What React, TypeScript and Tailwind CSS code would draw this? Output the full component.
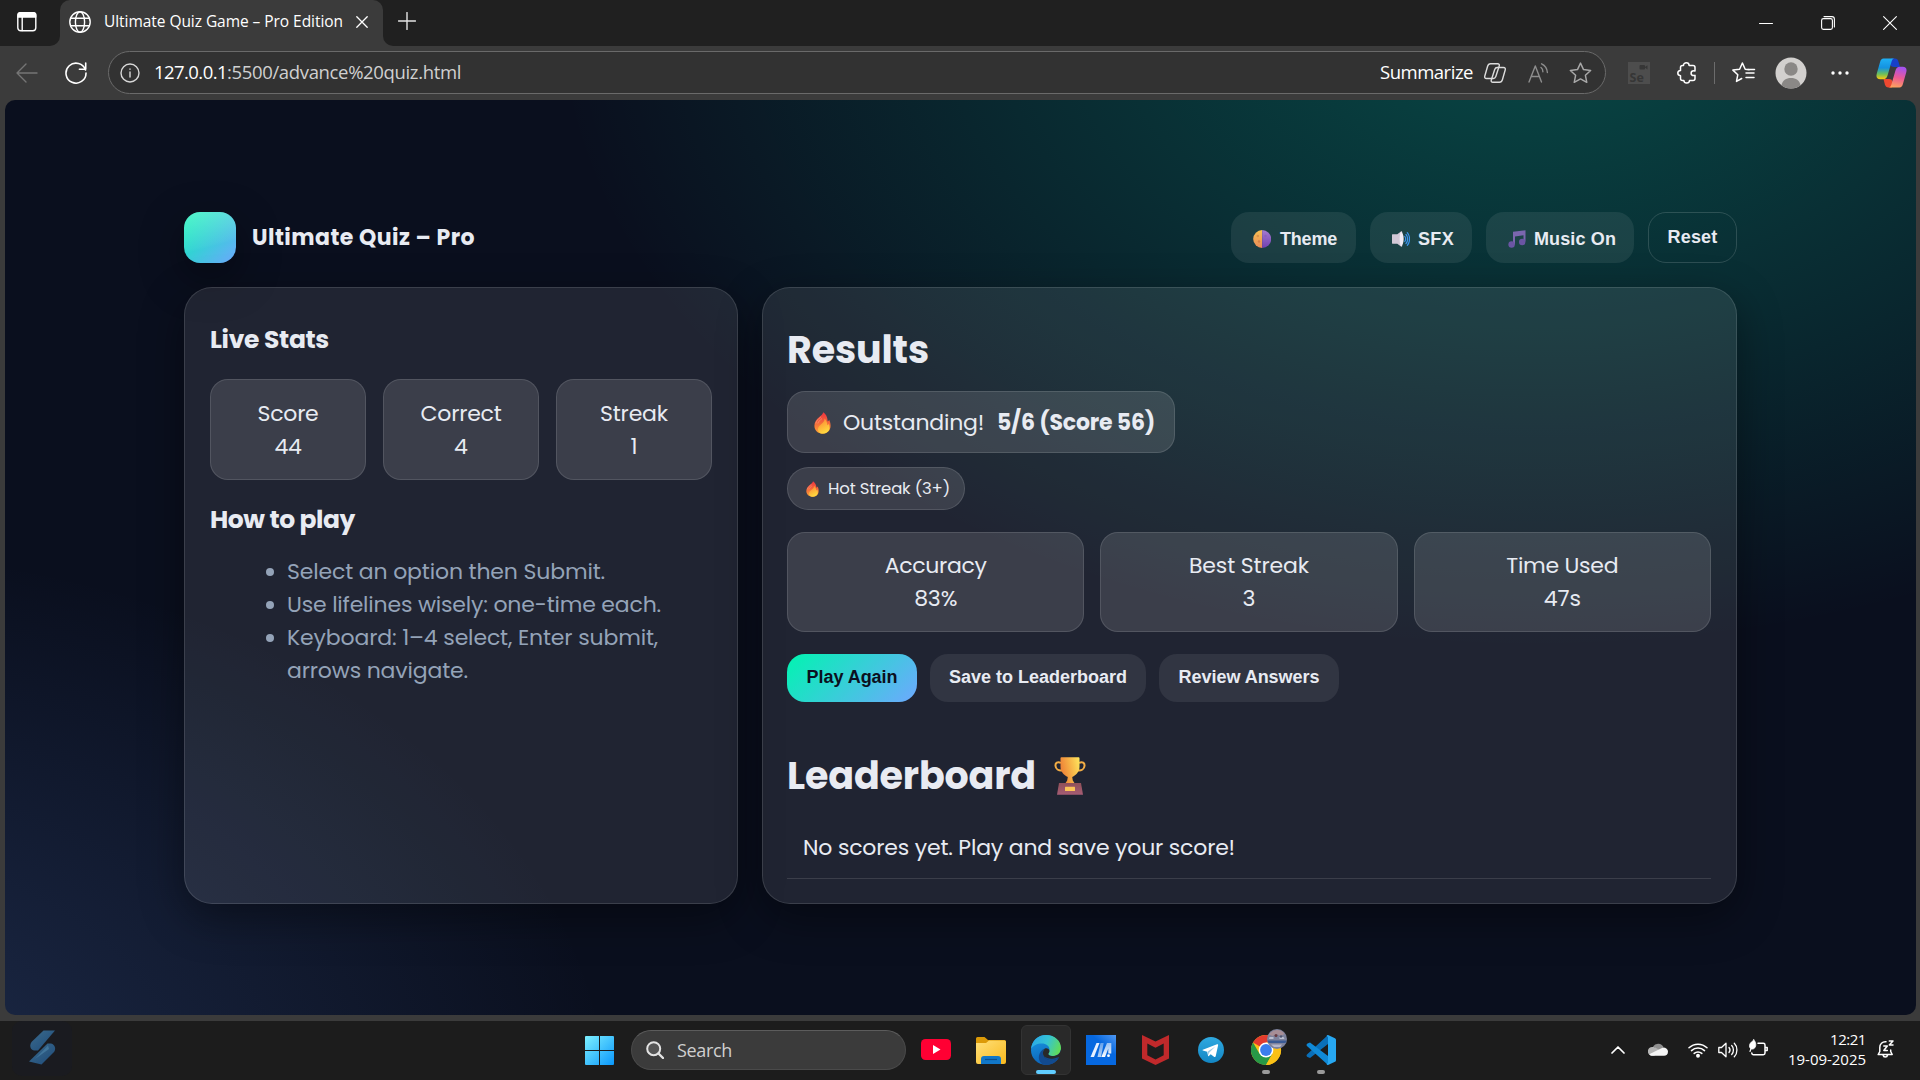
import { useLayoutEffect, useRef, type ReactNode } from 'react';

/** A single line of text whose tracking is adjusted so that it spans `w` pixels. */
function Fit({ w, className = '', children }: { w: number; className?: string; children: string }) {
  const ref = useRef<HTMLSpanElement>(null);
  useLayoutEffect(() => {
    const el = ref.current;
    if (!el) return;
    el.style.letterSpacing = '0px';
    const natural = el.getBoundingClientRect().width;
    el.style.letterSpacing = `${(w - natural) / children.length}px`;
  }, [w, children]);
  return (
    <span ref={ref} className={`inline-block shrink-0 whitespace-pre ${className}`}>
      {children}
    </span>
  );
}

/* ---------- emoji drawings ---------- */

function Fire({ className }: { className: string }) {
  return (
    <svg viewBox="0 0 17 22" className={className} preserveAspectRatio="none">
      <defs>
        <linearGradient id="fireOuter" x1="0" y1="0" x2="0" y2="1">
          <stop offset="0" stopColor="#ef3340" />
          <stop offset=".5" stopColor="#f46a3a" />
          <stop offset="1" stopColor="#fca436" />
        </linearGradient>
        <linearGradient id="fireInner" x1="0" y1="0" x2=".4" y2="1">
          <stop offset="0" stopColor="#fb7a36" />
          <stop offset=".45" stopColor="#fda638" />
          <stop offset="1" stopColor="#ffd83f" />
        </linearGradient>
      </defs>
      <path d="M9.200.3c-.4 2.300-2.400 3.400-3.900 4.700C2.600 7.200.4 9.800.4 13.800.4 18.600 4 21.700 8.500 21.700s8.100-3.100 8.100-8c0-2.800-.8-4.500-1.400-6-.5.9-.9 1.300-1.500 1.700C13.600 5.200 11.800 2 9.200.3Z" fill="url(#fireOuter)" />
      <path d="M1.800 11.500C2.500 8.500 4.500 6.800 7 4.800M3.800 11.500C4.500 9.500 6 8 8 6.500" fill="none" stroke="#f9a08a" strokeWidth=".6" />
      <path d="M10.500 6.500c.2 2.800-1.900 4.500-3.600 6-1.500 1.300-3 2.700-3 4.900 0 2.700 2.200 4.200 5 4.200 3.900 0 6.600-2.500 6.600-6 0-1.500-.3-2.800-.9-3.900-.3.8-.7 1.200-1.300 1.500-.1-2.700-1-5.200-2.800-6.700Z" fill="url(#fireInner)" />
    </svg>
  );
}

function HalfMoon() {
  return (
    <svg viewBox="0 0 18 18" className="size-[18px]">
      <defs>
        <linearGradient id="moonL" x1="0" y1="0" x2="0" y2="1">
          <stop offset="0" stopColor="#f8c152" />
          <stop offset="1" stopColor="#e98a58" />
        </linearGradient>
        <linearGradient id="moonR" x1="0" y1="0" x2="0" y2="1">
          <stop offset="0" stopColor="#a57bd0" />
          <stop offset="1" stopColor="#7140b0" />
        </linearGradient>
      </defs>
      <path d="M9.200 0v18A9 9 0 0 1 9.200 0Z" fill="url(#moonL)" />
      <path d="M9.200 0v18A9 9 0 0 0 9.200 0Z" fill="url(#moonR)" />
      <circle cx="4.800" cy="6" r="1.300" fill="#d9934a" />
      <circle cx="6" cy="11.500" r="1.200" fill="#d98048" />
      <circle cx="12.500" cy="6" r="1.200" fill="#8a5fc0" />
      <circle cx="13.500" cy="11" r="1" fill="#8658bb" />
    </svg>
  );
}

function Speaker() {
  return (
    <svg viewBox="0 0 18 16" className="h-4 w-[18px]">
      <path d="M.5 3.300h4.800L9 .4c.6-.3 1.200 0 1.200.5v14.200c0 .5-.6.8-1.200.5l-3.700-2.900H.5c-.3 0-.5-.2-.5-.5V3.800c0-.3.2-.5.5-.5Z" fill="#d2c8d6" />
      <path d="M9 .6c-1.800 3.500-1.800 11.300 0 14.800 3.600-2 3.600-12.800 0-14.800Z" fill="#f0ebf4" />
      <path d="M12.800 5.500c1 1.400 1 3.600 0 5M14 3.500c2.200 2.300 2.200 6.700 0 9M15.300 1.700c3 3.400 3 9.200 0 12.600" fill="none" stroke="#3b94ea" strokeWidth="1.200" strokeLinecap="round" />
    </svg>
  );
}

function Notes() {
  return (
    <svg viewBox="0 0 18 18" className="size-[18px]">
      <path d="M5 1.800 17.500.2v11.300h-2V5.200L7 6.400v8.100H5Z" fill="#7a66ae" />
      <circle cx="3.600" cy="14.500" r="3.200" fill="#6a55a3" />
      <circle cx="14.200" cy="12" r="3.200" fill="#6a55a3" />
    </svg>
  );
}

function Trophy() {
  return (
    <svg viewBox="0 0 32 38" className="h-[38px] w-8">
      <defs>
        <linearGradient id="cup" x1="0" x2="1" y1=".3" y2="0">
          <stop offset="0" stopColor="#ee8438" />
          <stop offset=".5" stopColor="#f7b548" />
          <stop offset="1" stopColor="#ffe75e" />
        </linearGradient>
        <linearGradient id="base" x1="0" x2="0" y1="0" y2="1">
          <stop offset="0" stopColor="#8f5058" />
          <stop offset="1" stopColor="#a55c74" />
        </linearGradient>
      </defs>
      <path d="M7 6C3.500 4 1.200 6 1.500 8.800c.3 3 3 5 6.500 4.700M25 6c3.500-2 5.800 0 5.500 2.800-.3 3-3 5-6.500 4.700" fill="none" stroke="#f3ad45" strokeWidth="2" />
      <path d="M6.500 1.200c0-.6.300-.9.900-.9h17.200c.6 0 .9.300.9.900v8.600c0 4.700-3.300 8.600-7.300 10.200l.6 3.500 2 3H11.200l2-3 .6-3.500c-4-1.600-7.300-5.500-7.300-10.200Z" fill="url(#cup)" />
      <path d="M5 26h22l2 11.700H3Z" fill="url(#base)" />
      <rect x="11" y="29.800" width="10" height="4.200" rx=".5" fill="#fbc458" />
    </svg>
  );
}

/* ---------- browser chrome ---------- */

function Stroke({ box, className, children, color = '#fff', w = 1.5 }: { box: string; className: string; children: ReactNode; color?: string; w?: number }) {
  return (
    <svg viewBox={box} className={`shrink-0 ${className}`} fill="none" stroke={color} strokeWidth={w} strokeLinecap="round" strokeLinejoin="round">
      {children}
    </svg>
  );
}

function TitleBar() {
  return (
    <div className="flex h-[46px] items-start bg-[#202020]">
      <div className="flex h-[46px] w-[60px] bg-[#3b3b3b]">
        <div className="flex h-full w-full rounded-br-[10px] bg-[#202020] pt-3 pl-[17px]">
          <Stroke box="0 0 20 20" className="size-5" w={1.4}>
            <rect x=".8" y=".8" width="18" height="18" rx="3" />
            <path d="M1 2.600C1 1.500 2 .8 3 .8h13.500c1.300 0 2.200.8 2.200 2V5H1Z" fill="#fff" />
            <path d="M5.200 5v13.500" />
          </Stroke>
        </div>
      </div>
      <div className="flex h-[46px] w-[323px] items-center rounded-t-[10px] bg-[#3b3b3b] pb-[2px] pl-[9px]">
        <Stroke box="0 0 22 22" className="size-[22px]" w={1.4}>
          <circle cx="11" cy="11" r="10.200" />
          <ellipse cx="11" cy="11" rx="4.600" ry="10.200" />
          <path d="M1.700 7.300h18.600M1.700 14.700h18.600" />
        </Stroke>
        <Fit w={239} className="mb-[2px] ml-[13px] text-[15.500px] leading-5 text-white">Ultimate Quiz Game – Pro Edition</Fit>
        <Stroke box="0 0 12 12" className="ml-[13px] size-3" w={1.300}>
          <path d="m.8.8 10.400 10.400M11.200.8.8 11.200" />
        </Stroke>
      </div>
      <div className="flex h-[46px] flex-1 bg-[#3b3b3b]">
        <div className="flex flex-1 rounded-bl-[10px] bg-[#202020] pl-[15px]">
          <Stroke box="0 0 18 18" className="mt-3 size-[18px]" color="#e4e4e4" w={1.400}>
            <path d="M9 .5v17M.5 9h17" />
          </Stroke>
          <div className="flex flex-1 justify-end gap-12 pt-4 pr-[23px]">
            <Stroke box="0 0 14 14" className="size-[14px]" w={1}>
              <path d="M.5 7.500h13" />
            </Stroke>
            <Stroke box="0 0 14 14" className="size-[14px]" w={1.100}>
              <rect x=".6" y="2.600" width="10.800" height="10.800" rx="1.800" />
              <path d="M3 .6h8c1.500 0 2.400 1 2.400 2.400v8" />
            </Stroke>
            <Stroke box="0 0 14 14" className="size-[14px]" w={1.100}>
              <path d="m.6.6 12.800 12.800M13.400.6.6 13.400" />
            </Stroke>
          </div>
        </div>
      </div>
    </div>
  );
}

const STAR = 'M11 1l2.900 6.200 6.800.8-5 4.700 1.300 6.700-6-3.300-6 3.300 1.300-6.700-5-4.700 6.800-.8Z';

function Toolbar() {
  return (
    <div className="flex h-[54px] items-center bg-[#3b3b3b] pr-[13px] pb-px pl-4">
      <Stroke box="0 0 22 20" className="h-5 w-[22px]" color="#757575" w={1.400}>
        <path d="M10 1 1 10l9 9M1 10h20" />
      </Stroke>
      <Stroke box="0 0 22 22" className="ml-[27px] size-[22px]" w={1.600}>
        <path d="M20.500 8A10 10 0 1 0 21 11M20.700 1v6.300h-6.300" />
      </Stroke>
      <div className="ml-[21px] flex h-[43px] w-[1498px] items-center rounded-full border border-[#6a6a6a] bg-[#323232] pl-[11px]">
        <Stroke box="0 0 20 20" className="size-5" color="#d8d8d8" w={1.400}>
          <circle cx="10" cy="10" r="9" />
          <path d="M10 9v5M10 6v.2" />
        </Stroke>
        <Fit w={73} className="mb-px ml-[14px] text-[18.500px] leading-6 text-white">127.0.0.1</Fit>
        <Fit w={234} className="mb-px text-[18.500px] leading-6 text-[#d0d0d0]">:5500/advance%20quiz.html</Fit>
        <div className="mr-[13px] ml-auto flex items-center">
          <Fit w={93} className="mb-px text-[18.500px] leading-6 text-white">Summarize</Fit>
          <Stroke box="0 0 22 20" className="ml-[11px] h-5 w-[22px]" color="#dcdcdc" w={1.400}>
            <path d="M6.500.8h7.200c1.300 0 1.900 1 1.500 2.200l-3.400 10.500c-.5 1.500-1.200 2-2.500 2H2.500C1 15.500.4 14.500.8 13L3.600 3.300C4.100 1.600 5 .8 6.500.8Z" />
            <path d="M15.500 19.200H8.800c-1.300 0-1.900-1-1.500-2.200l3.400-10.500c.5-1.500 1.200-2 2.500-2h6.300c1.500 0 2.100 1 1.700 2.500l-2.800 9.700c-.5 1.700-1.400 2.500-2.900 2.500Z" />
          </Stroke>
          <Stroke box="0 0 22 20" className="ml-[22px] h-5 w-[22px]" color="#8d8d8d" w={1.400}>
            <path d="M1 19 7.300 3 13.500 19M3.300 13.500h8M13 4.500c1.300 1 1.900 2.500 1.900 4.200M13.600.8c3.200 1.500 5.500 4.300 5.800 8.700" />
          </Stroke>
          <Stroke box="0 0 22 20" className="ml-[19px] h-[21px] w-[23px]" color="#a8a8a8" w={1.400}>
            <path d={STAR} />
          </Stroke>
        </div>
      </div>
      <svg viewBox="0 0 22 22" className="ml-[22px] size-[22px] shrink-0">
        <rect width="22" height="22" fill="#4d4d4d" />
        <rect x="11.500" y="3" width="5.500" height="4.500" rx="1" fill="#363636" />
        <path d="m16.500 5.200 3-2v4.200Z" fill="#363636" />
        <text x="1.500" y="19.500" fontSize="12.500" fontWeight="700" fill="#363636" fontFamily="Open Sans, sans-serif">Se</text>
      </svg>
      <Stroke box="0 0 20 22" className="ml-[27px] h-[22px] w-5" w={1.500}>
        <path d="M6.500 3.500c0-1.600 1.200-2.700 2.800-2.700s2.800 1.100 2.800 2.700H16c1.200 0 2 .8 2 2v3.600c-.4-.2-.8-.3-1.200-.3-1.600 0-2.700 1-2.700 2.400s1.100 2.400 2.700 2.400c.4 0 .8-.1 1.200-.3v3.200c0 1.200-.8 2-2 2h-3.500c-.1 1.600-1.300 2.600-2.800 2.600s-2.700-1-2.800-2.600H5.500c-1.200 0-2-.8-2-2v-2.800C1.900 13.600.8 12.600.8 11.100S1.900 8.500 3.500 8.400V5.500c0-1.200.8-2 2-2Z" />
      </Stroke>
      <div className="ml-[17px] h-[22px] w-px shrink-0 bg-[#6c6c6c]" />
      <Stroke box="0 0 24 22" className="ml-[17px] h-[22px] w-6" w={1.500}>
        <path d="M17 7.800l-3.800-.5L10.400 1 7.600 7.300l-6.700.8 4.900 4.600-1.300 6.700 5.200-2.900M14 11h8M14 15.500h8M16 7.500h6.500" />
      </Stroke>
      <svg viewBox="0 0 32 32" className="ml-[19px] size-8 shrink-0">
        <circle cx="16" cy="16" r="15.500" fill="#d2d0ce" />
        <circle cx="16" cy="12" r="6.700" fill="#8a8886" />
        <path d="M6.500 28.200C7.500 23.500 11 21 16 21s8.500 2.500 9.500 7.200a15.400 15.400 0 0 1-19 0Z" fill="#8a8886" />
      </svg>
      <svg viewBox="0 0 18 4" className="ml-[24px] h-1 w-[18px] shrink-0" fill="#fff">
        <circle cx="2" cy="2" r="1.700" />
        <circle cx="9" cy="2" r="1.700" />
        <circle cx="16" cy="2" r="1.700" />
      </svg>
      <svg viewBox="0 0 31 30" className="mt-px ml-auto h-[30px] w-[31px] shrink-0">
        <defs>
          <linearGradient id="cpA" x1="0" y1="0" x2="0" y2="1">
            <stop offset="0" stopColor="#1fb0f5" />
            <stop offset=".45" stopColor="#1492e0" />
            <stop offset=".75" stopColor="#6cc05a" />
            <stop offset="1" stopColor="#fcc80e" />
          </linearGradient>
          <linearGradient id="cpB" x1=".5" y1="0" x2=".3" y2="1">
            <stop offset="0" stopColor="#a552ee" />
            <stop offset=".5" stopColor="#ec5a94" />
            <stop offset="1" stopColor="#ffa45c" />
          </linearGradient>
        </defs>
        <path d="M15 .5h4c2 0 2.800 1 3.500 3.300L24 9h-6c-2 0-3-.7-3.500-2.500Z" fill="#1740c8" />
        <path d="M16 29.500h-3.500c-2 0-3-1-3.600-3L7.500 21H13c2 0 3 .8 3.500 2.500Z" fill="#ee4830" />
        <path d="M7.500.5h11c-1.500 0-2.300 1-2.900 3L11.700 17c-.9 3-2 4.200-4.700 4.200H4.200C1 21.200-.2 19 .8 15.500L4 4.200C4.700 1.700 5.700.5 7.500.5Z" fill="url(#cpA)" />
        <path d="M23.500 29.500h-11c1.500 0 2.300-1 2.900-3L19.300 13c.9-3 2-4.200 4.700-4.200h2.800c3.200 0 4.400 2.200 3.400 5.700L27 25.800c-.7 2.500-1.700 3.700-3.500 3.700Z" fill="url(#cpB)" />
      </svg>
    </div>
  );
}

/* ---------- quiz page ---------- */

function Tile({ label, lw, value, vw }: { label: string; lw: number; value: string; vw: number }) {
  return (
    <div className="flex flex-1 flex-col items-center justify-center rounded-[18px] border border-white/12 bg-white/12">
      <Fit w={lw} className="leading-[33px]">{label}</Fit>
      <Fit w={vw} className="leading-[33px]">{value}</Fit>
    </div>
  );
}

function Header() {
  return (
    <div className="flex h-[51px] items-center">
      <div className="h-[51px] w-[52px] rounded-[16px] bg-[linear-gradient(165deg,rgba(255,255,255,0.32),rgba(255,255,255,0.04)_60%,transparent_65%),linear-gradient(135deg,#00f5b0,#6ea8ff)] shadow-[0_14px_44px_rgba(0,0,0,0.4)]" />
      <Fit w={223} className="ml-4 text-[22px] leading-8 font-bold">Ultimate Quiz – Pro</Fit>
      <div className="ml-auto flex h-[51px] gap-[14px] font-['Liberation_Sans',Arial,sans-serif] text-[18px] leading-5 font-bold">
        <div className="flex w-[125px] items-center rounded-[18px] bg-white/8 pt-[2px] pl-[22px]">
          <HalfMoon />
          <Fit w={57} className="ml-[9px]">Theme</Fit>
        </div>
        <div className="flex w-[102px] items-center rounded-[18px] bg-white/8 pt-[2px] pl-[22px]">
          <Speaker />
          <Fit w={36} className="ml-[8px]">SFX</Fit>
        </div>
        <div className="flex w-[148px] items-center rounded-[18px] bg-white/8 pt-[2px] pl-[22px]">
          <Notes />
          <Fit w={82} className="ml-[8px]">Music On</Fit>
        </div>
        <div className="flex w-[89px] items-center justify-center rounded-[18px] border border-white/15 pb-[2px]">
          <Fit w={50}>Reset</Fit>
        </div>
      </div>
    </div>
  );
}

const TIPS: { text: string; w: number; more?: { text: string; w: number } }[] = [
  { text: 'Select an option then Submit.', w: 318 },
  { text: 'Use lifelines wisely: one-time each.', w: 374 },
  { text: 'Keyboard: 1–4 select, Enter submit,', w: 371, more: { text: 'arrows navigate.', w: 181 } },
];

function StatsCard() {
  return (
    <div className="flex w-[554px] flex-col rounded-[28px] border border-white/12 bg-white/9 px-[25px] pt-[35px] shadow-[0_14px_44px_rgba(0,0,0,0.4)]">
      <Fit w={119} className="self-start text-[25px] leading-[34px] font-bold">Live Stats</Fit>
      <div className="mt-[22px] flex h-[101px] gap-[17px]">
        <Tile label="Score" lw={61} value="44" vw={27} />
        <Tile label="Correct" lw={81} value="4" vw={14} />
        <Tile label="Streak" lw={68} value="1" vw={7} />
      </div>
      <Fit w={145} className="mt-[22px] self-start text-[25px] leading-[36px] font-bold">How to play</Fit>
      <ul className="mt-[17px] flex flex-col pl-[56px] text-[#94a3b8]">
        {TIPS.map((t) => (
          <li key={t.text} className="flex items-start leading-[33px]">
            <span className="mt-[13px] mr-[13px] size-[8px] rounded-full bg-[#94a3b8]" />
            <span className="flex flex-col items-start">
              <Fit w={t.w}>{t.text}</Fit>
              {t.more && <Fit w={t.more.w}>{t.more.text}</Fit>}
            </span>
          </li>
        ))}
      </ul>
    </div>
  );
}

function ResultsCard() {
  return (
    <div className="flex w-[975px] flex-col rounded-[28px] border border-white/12 bg-white/9 pr-[25px] pl-6 shadow-[0_14px_44px_rgba(0,0,0,0.4)]">
      <Fit w={142} className="mt-[36px] self-start text-[38px] leading-[52px] font-bold">Results</Fit>
      <div className="mt-[15px] flex h-[62px] w-[388px] items-center rounded-[18px] border border-white/12 bg-white/12 pt-px pl-[26px]">
        <Fire className="h-[22px] w-[17px]" />
        <Fit w={141} className="ml-[12px]">Outstanding!</Fit>
        <Fit w={158} className="ml-[13px] font-bold">5/6 (Score 56)</Fit>
      </div>
      <div className="mt-[14px] flex h-[43px] w-[178px] items-center rounded-full border border-white/12 bg-white/12 pl-[18px] text-[16.500px]">
        <Fire className="h-4 w-[13px]" />
        <Fit w={122} className="mt-px ml-[9px]">Hot Streak (3+)</Fit>
      </div>
      <div className="mt-[22px] flex h-[100px] gap-4">
        <Tile label="Accuracy" lw={102} value="83%" vw={43} />
        <Tile label="Best Streak" lw={120} value="3" vw={13} />
        <Tile label="Time Used" lw={112} value="47s" vw={37} />
      </div>
      <div className="mt-[22px] flex h-12 gap-[13px] font-['Liberation_Sans',Arial,sans-serif] text-[18px] leading-5 font-bold">
        <div className="flex w-[130px] items-center justify-center rounded-[18px] bg-[linear-gradient(135deg,#00f5b0,#6ea8ff)] pb-[2px] text-[#0b1020]">
          <Fit w={91}>Play Again</Fit>
        </div>
        <div className="flex w-[216px] items-center justify-center rounded-[18px] bg-white/8 pb-[2px]">
          <Fit w={178}>Save to Leaderboard</Fit>
        </div>
        <div className="flex w-[180px] items-center justify-center rounded-[18px] bg-white/8 pb-[2px]">
          <Fit w={141}>Review Answers</Fit>
        </div>
      </div>
      <div className="mt-[47px] flex h-[54px] items-center">
        <Fit w={249} className="text-[38px] leading-[54px] font-bold">Leaderboard</Fit>
        <div className="ml-[18px]"><Trophy /></div>
      </div>
      <div className="mt-[15px] flex h-[61px] items-center border-b border-white/12 pb-[2px] pl-4">
        <Fit w={432}>No scores yet. Play and save your score!</Fit>
      </div>
    </div>
  );
}

function QuizPage() {
  return (
    <div className="h-[915px] overflow-hidden rounded-[10px] bg-[#0a0f1e] bg-[radial-gradient(980px_640px_at_80%_-10%,rgba(0,245,190,0.25),transparent),radial-gradient(800px_560px_at_-10%_110%,rgba(105,155,250,0.21),transparent)] px-[179px] pt-[112px] font-[Poppins,Inter,sans-serif] text-[22px] text-[#e8ebf2]">
      <Header />
      <div className="mt-[24px] flex h-[617px] gap-6">
        <StatsCard />
        <ResultsCard />
      </div>
    </div>
  );
}

/* ---------- taskbar ---------- */

function Taskbar() {
  return (
    <div className="flex h-[59px] bg-[#1c1c1c]">
      <div className="flex w-[585px] pl-[12px]">
        <div className="flex h-[55px] w-[60px] items-start justify-center rounded-[10px] bg-[#1a1b20] pt-[9px]">
          <svg viewBox="0 0 27 35" className="h-[35px] w-[27px]">
            <defs>
              <linearGradient id="wa" x1="0" y1="0" x2="1" y2="1">
                <stop offset="0" stopColor="#3b6b8d" />
                <stop offset="1" stopColor="#1e4a78" />
              </linearGradient>
            </defs>
            <path d="M14.500.5H26L9 20.500H5C1 19.500 0 15 3 11.500Z" fill="url(#wa)" />
            <path d="M18.500 13.500h3.500c4.500 1 5 6 3 8.500L12.500 34.500 0 31.500Z" fill="url(#wa)" />
            <path d="M19 15.500 6 29l14-10Z" fill="#41759b" />
          </svg>
        </div>
      </div>
      <svg viewBox="0 0 29 29" className="mt-[15px] size-[29px] shrink-0">
        <defs>
          <linearGradient id="win" x1="0" y1="0" x2="29" y2="29" gradientUnits="userSpaceOnUse">
            <stop offset="0" stopColor="#7df0ff" />
            <stop offset="1" stopColor="#0a97fb" />
          </linearGradient>
        </defs>
        <path d="M0 1q0-1 1-1h13v14H0ZM15 0h13q1 0 1 1v13H15ZM0 15h14v14H1q-1 0-1-1ZM15 15h14v13q0 1-1 1H15Z" fill="url(#win)" />
      </svg>
      <div className="mt-[9px] ml-[17px] flex h-10 w-[275px] shrink-0 items-center rounded-full border border-[#4a4a4a] border-t-[#5c5c5c] bg-[#3b3b3b] pl-[14px]">
        <Stroke box="0 0 18 18" className="size-[18px]" color="#e3e3e3" w={2}>
          <circle cx="7.700" cy="7.700" r="6.500" fill="#555" />
          <path d="m12.500 12.500 4.500 4.500" strokeWidth="2.400" />
        </Stroke>
        <Fit w={55} className="ml-[13px] text-[18px] leading-6 text-[#cfcfcf]">Search</Fit>
      </div>
      <svg viewBox="0 0 30 21" className="mt-[18px] ml-[15px] h-[21px] w-[30px] shrink-0">
        <rect width="30" height="21" rx="4.500" fill="#ff0033" />
        <path d="M12 6v9l7.500-4.500Z" fill="#fff" />
      </svg>
      <svg viewBox="0 0 30 27" className="mt-4 ml-[25px] h-[27px] w-[30px] shrink-0">
        <defs>
          <linearGradient id="fold" x1="0" y1="0" x2="1" y2="1">
            <stop offset="0" stopColor="#ffe07a" />
            <stop offset="1" stopColor="#f9b91d" />
          </linearGradient>
        </defs>
        <path d="M0 1.500Q0 0 1.500 0h7L12 3h16.500Q30 3 30 4.500V9H0Z" fill="#dc9a08" />
        <path d="M0 6h10l3-2.500h15.500q1.500 0 1.500 1.500v20q0 2-2 2H2q-2 0-2-2Z" fill="url(#fold)" />
        <path d="M5 27v-5q0-3 3-3h14q3 0 3 3v5Z" fill="#1177c8" />
        <path d="M9 22.500h12" stroke="#0b4f8f" strokeWidth="1.200" />
      </svg>
      <div className="mt-1 ml-[15px] flex h-[50px] w-[50px] shrink-0 flex-col items-center rounded-[6px] border border-[#333] bg-[#292929] pt-[9px]">
        <svg viewBox="0 0 30 30" className="size-[30px]">
          <defs>
            <linearGradient id="edgeTop" x1="0" y1=".3" x2="1" y2=".6">
              <stop offset="0" stopColor="#2aa8e8" />
              <stop offset=".5" stopColor="#35c3d4" />
              <stop offset="1" stopColor="#62dc55" />
            </linearGradient>
            <linearGradient id="edgeSide" x1="0" y1="0" x2=".3" y2="1">
              <stop offset="0" stopColor="#1a9be6" />
              <stop offset="1" stopColor="#0c63b8" />
            </linearGradient>
          </defs>
          <circle cx="15" cy="15" r="15" fill="url(#edgeSide)" />
          <path d="M0 14C1 5.500 7 0 15 0c9 0 15 6 15 13 0 5-3.500 8-8 8-3.500 0-5-1.200-5-2.200 0-.8 1.500-1.600 1.500-4.300C18.500 11 15 8.500 11 8.500 6 8.500 2 10.500 0 14Z" fill="url(#edgeTop)" />
          <path d="M28 22.500c-3 5-8 7.500-13 7.500-5 0-8-5-7-9.500.7-3.300 2.800-6 6-7-1.800 1.500-2.300 3.500-2 5.500.6 4 4 6.500 8.500 6.500 3 0 5.500-1.300 7-2.500q1-.5.500-.5Z" fill="#124a8f" />
          <path d="M17.500 19.500c.8 1.200 2.500 1.500 4.500 1.500 4 0 7-2.500 7.600-5.500l.4-1v6l-2 2.500c-2 1.200-4.500 2.300-7.500 2.300-4.500 0-8-2.500-8.500-6.300-.3-2.500.6-4.500 2-5.500 1.700-1 4.500.5 4.500 2.500 0 1.800-1.500 2.300-1 3.500Z" fill="#292929" />
          <path d="M28 22.500c-2 1.700-4.500 2.800-7.500 2.800-3.500 0-6.500-1.500-7.800-4.300 2.800 2.500 6.800 3 9.800 2.500 2-.3 4-.9 5-1.500Z" fill="#124a8f" />
        </svg>
        <div className="mt-[5px] h-1 w-5 shrink-0 rounded-full bg-[#60cdff]" />
      </div>
      <svg viewBox="0 0 30 30" className="mt-[14px] ml-[15px] size-[30px] shrink-0">
        <defs>
          <linearGradient id="ma" x1="1" y1="0" x2=".3" y2=".8">
            <stop offset="0" stopColor="#4f98f2" />
            <stop offset=".5" stopColor="#0668e0" />
            <stop offset="1" stopColor="#0668e0" />
          </linearGradient>
          <linearGradient id="maBar" x1="0" y1="0" x2="0" y2="1">
            <stop offset="0" stopColor="#fff" stopOpacity=".55" />
            <stop offset="1" stopColor="#fff" />
          </linearGradient>
        </defs>
        <rect width="30" height="30" fill="url(#ma)" />
        <path d="M10.500 8h3L8 22H4.500Z" fill="#e6f0ff" />
        <path d="M14.500 8h3.200L15 22h-3.500Z" fill="url(#maBar)" opacity=".7" />
        <path d="M21 8h4.300v10.500h-3v-5L19 22h-3.700Z" fill="url(#maBar)" />
        <circle cx="22.500" cy="20.700" r="1.400" fill="#fff" />
      </svg>
      <svg viewBox="0 0 27 30" className="mt-[14px] ml-[26px] h-[30px] w-[27px] shrink-0">
        <path d="M0 0 13.500 6.500 27 0v23.500L13.500 30 0 23.500ZM5.300 8.500v11.800l8.200 4.200 8.200-4.200V8.500l-8.200 4.300Z" fill="#c0292b" fillRule="evenodd" />
      </svg>
      <svg viewBox="0 0 26 26" className="mt-4 ml-[29px] size-[26px] shrink-0">
        <defs>
          <linearGradient id="tg" x1="0" y1="0" x2="0" y2="1">
            <stop offset="0" stopColor="#2fa9e0" />
            <stop offset="1" stopColor="#1386c4" />
          </linearGradient>
        </defs>
        <circle cx="13" cy="13" r="13" fill="url(#tg)" />
        <path d="M4.800 12.800 19 7.300c.8-.3 1.300.2 1.100 1l-2.400 11c-.2.800-.8 1-1.400.6l-3.600-2.700-1.800 1.700c-.4.400-.8.300-.9-.3l-.8-3.800-4.300-1.300c-.6-.2-.6-.5-.1-.7Z" fill="#fff" />
        <path d="m9.600 14.600 7.800-5-6.300 6.200-.3 2.800Z" fill="#9dcbe6" />
      </svg>
      <div className="mt-[8px] ml-[27px] flex w-9 shrink-0 flex-col">
        <svg viewBox="0 0 36 36" className="size-9">
          <circle cx="15" cy="21" r="15" fill="#fbc116" />
          <path d="M15 21 2 13.500A15 15 0 0 1 28 13.500H15Z" fill="#e33b2e" />
          <path d="M2 13.500A15 15 0 0 0 15 36l6.500-11.300L15 21l-6.500 3.700Z" fill="#279847" />
          <path d="M15 36a15 15 0 0 0 13-22.500H15l6.500 11.200Z" fill="#fbc116" />
          <circle cx="15" cy="21" r="7.400" fill="#fff" />
          <circle cx="15" cy="21" r="5.900" fill="#3b7ded" />
          <circle cx="26" cy="10" r="10" fill="#7d829c" />
          <path d="M18 5.500Q21.500 1 26 1q5 0 7.500 4l-4 2-4-2-4 2Z" fill="#a78e96" />
          <path d="M16.500 11.500h19l-1 2.500h-17Z" fill="#3a5a94" />
          <path d="M18.500 8h4v2h6V8h4l1 2H18Z" fill="#b9bed0" />
          <path d="M20 15.500h11l-2 2.500h-6Z" fill="#b6b6ca" />
          <circle cx="25" cy="6.500" r="1.500" fill="#6b3b40" />
          <circle cx="30" cy="7.500" r="1.200" fill="#4c5470" />
        </svg>
        <div className="mt-[5px] ml-[11px] h-1 w-2 rounded-full bg-[#9a9a9a]" />
      </div>
      <div className="mt-[14px] ml-[19px] flex w-[30px] shrink-0 flex-col items-center">
        <svg viewBox="0 0 30 30" className="size-[30px]">
          <path d="M22 0v9L4 23 1.500 22q-2-1.500 0-3Z" fill="#0a6fb8" />
          <path d="M22 30v-9L4 7.500 1.500 8.500q-2 1.500 0 3Z" fill="#1089d6" />
          <path d="m22 0 7 3.200q1 .5 1 1.500v20.600q0 1-1 1.500L22 30q-1 0-1.500-1l1.500-1V2l-1.500-1Q21 0 22 0Z" fill="#27a8f2" />
        </svg>
        <div className="mt-[5px] h-1 w-2 rounded-full bg-[#9a9a9a]" />
      </div>
      <div className="mr-[26px] ml-auto flex items-start">
        <Stroke box="0 0 14 8" className="mt-[25px] h-2 w-[14px]" w={1.700}>
          <path d="m1 7 6-6 6 6" />
        </Stroke>
        <svg viewBox="0 0 20 13" className="mt-[22px] ml-[23px] h-[13px] w-5 shrink-0">
          <path d="M5 3.500A6 6 0 0 1 15.500 4l-4 4Z" fill="#8f8f8f" />
          <path d="M4 12.800A4.300 4.300 0 0 1 4.500 4c2 0 3 .5 4.500 1.500l5 3-8 4.300Z" fill="#b5b5b5" />
          <path d="M15 4.500c3 0 5 1.700 5 4.200 0 2.400-1.700 4.100-4 4.100H4.500c-1.500 0-2.500-.5-3.300-1.600Z" fill="#f5f5f5" />
        </svg>
        <Stroke box="0 0 20 16" className="mt-[21px] ml-[20px] h-4 w-5" w={1.500}>
          <path d="M1 5.800a13 13 0 0 1 18 0M3.500 8.600a9.300 9.300 0 0 1 13 0M6.200 11.400a5.500 5.500 0 0 1 7.600 0" />
          <circle cx="10" cy="13.700" r="1.200" fill="#fff" />
        </Stroke>
        <Stroke box="0 0 20 16" className="mt-[21px] ml-[10px] h-4 w-5" w={1.300}>
          <path d="M.8 5.500h2.700L8 1.200v13.600l-4.500-4.300H.8ZM11 5.500c1.200 1.400 1.200 3.600 0 5M13.700 3.500c2.300 2.300 2.300 6.700 0 9M16.300 1.200c3.500 3.400 3.500 10.200 0 13.600" />
        </Stroke>
        <Stroke box="0 0 20 17" className="mt-[18px] ml-[10px] h-[17px] w-5" w={1.500}>
          <path d="M10 4.300h5.300c1 0 1.700.7 1.700 1.700v8c0 1-.7 1.700-1.700 1.700H5.500c-1 0-1.700-.7-1.700-1.700M17.500 8.500h1.700v3h-1.700" />
          <path d="M5.800.8C8 3.300 8.500 6.500 6.800 8.800c-1.300 1.600-3.300 1.600-4.500.4-1.200-1.300-1-3.700.2-5.200C3.300 2.800 5 2.400 5.800.8Z" fill="#fff" strokeWidth=".8" />
          <path d="M4.300 6 2 12.500" strokeWidth="1.200" />
        </Stroke>
        <div className="mt-[8px] ml-[20px] flex w-[78px] flex-col items-end text-[15px] leading-5 text-white">
          <Fit w={36}>12:21</Fit>
          <Fit w={78}>19-09-2025</Fit>
        </div>
        <Stroke box="0 0 17 18" className="mt-[19px] ml-[11px] h-[18px] w-[17px]" w={1.500}>
          <path d="M9 1.800C5.200 1.500 2.800 4 2.800 7.500v4L1.200 14.500h14l-1.500-3v-1.500M6 15c.3 1.400 1.200 2 2.300 2s2-.6 2.300-2M6.800 6h3.500l-3.500 4.500h3.500M12.300.9h3.700L12.300 5H16" />
        </Stroke>
      </div>
    </div>
  );
}

export default function App() {
  return (
    <div className="flex h-[1080px] w-[1920px] flex-col overflow-hidden bg-[#3b3b3b] font-['Segoe_UI','Open_Sans',sans-serif]">
      <TitleBar />
      <Toolbar />
      <div className="mr-1 mb-[6px] ml-[5px]">
        <QuizPage />
      </div>
      <Taskbar />
    </div>
  );
}
